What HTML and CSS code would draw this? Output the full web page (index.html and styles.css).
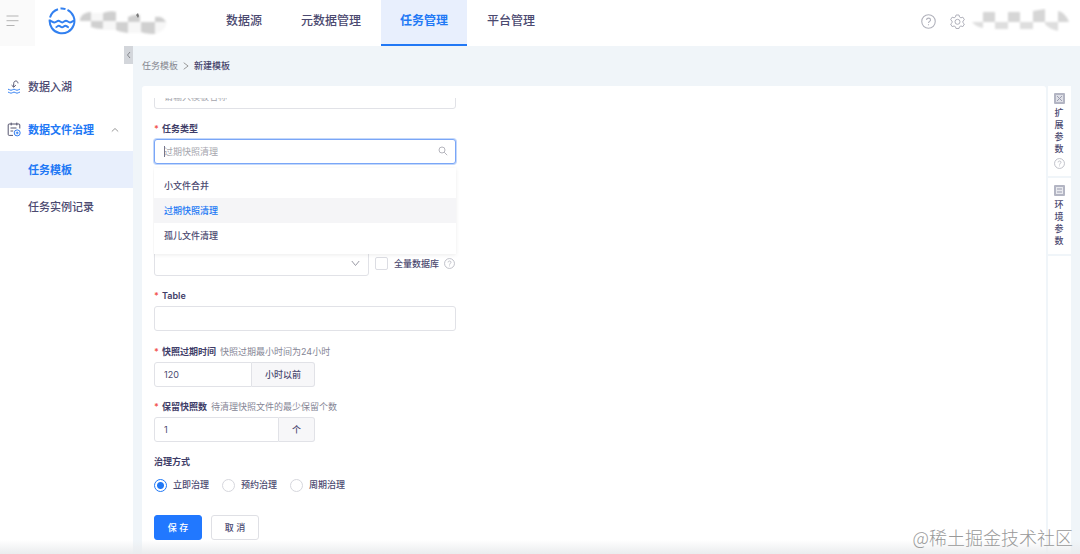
FILE: index.html
```html
<!DOCTYPE html>
<html lang="zh-CN">
<head>
<meta charset="utf-8">
<title>新建模板</title>
<link rel="stylesheet" href="styles.css">
</head>
<body>
<svg class="defs" aria-hidden="true">
  <symbol id="help" viewBox="0 0 14 14"><circle cx="7" cy="7" r="6.3"/><path d="M5.2 5.6c0-2.4 3.7-2.3 3.7-.1 0 1.5-1.9 1.4-1.9 3M7 9.6v1"/></symbol>
  <filter id="soft"><feGaussianBlur stdDeviation="0.9"/></filter>
</svg>
<div class="app">
  <header class="header">
    <button class="menu-btn" aria-label="菜单">
      <svg width="13" height="12" viewBox="0 0 13 12"><path d="M.5 1h12M.5 5.700h12M.5 10.500h8"/></svg>
    </button>
    <div class="brand">
      <svg class="logo" width="28" height="28" viewBox="0 0 28 28">
        <path d="M2 10.500A12.400 12.400 0 0 1 10 2.300M12.500 1.600a12.400 12.400 0 0 1 5 .5M19.500 2.800A12.400 12.400 0 1 1 1.700 12.500"/>
        <path d="M1.800 13.700c2 0 2.600 1.700 4.600 1.700s2.600-1.700 4-1.700 2.300 1.700 3.800 1.700 2.300-1.700 3.800-1.700 2.300 1.700 4 1.700 2.500-1.700 4.300-1.700M7.600 20.200c1.800 0 1.800-1.500 3.200-1.500s1.900 1.600 3.300 1.600 1.900-1.600 3.300-1.600 1.700 1.500 3.400 1.500"/>
      </svg>
      <svg class="mosaic" width="90" height="26" viewBox="0 0 90 26">
        <g filter="url(#soft)">
          <path fill="#cfcfcf" d="M1 9C3 4 7 2 12 2v9H1zM24 3q8-3 13-1v9H24zM49 7q6-3 12-2v7H49zM76 7q8-1 11 5H76z"/>
          <path fill="#d0d0d0" d="M12 11h12v8q-7 0-12-2zM37 12h12v11q-8-1-12-3zM62 12h14v12q-9 0-14-2z"/>
          <path fill="#f7f7f7" d="M12 3h12v8H12zM24 11h13v9H24zM49 12h13v11H49zM76 12h12q-1 9-12 12z"/>
        </g>
        <path fill="#777" d="M57 5l2-2 1 3-1 2z"/>
      </svg>
    </div>
    <nav class="nav">
      <a href="#">数据源</a>
      <a href="#">元数据管理</a>
      <a href="#" class="active" aria-current="page">任务管理</a>
      <a href="#">平台管理</a>
    </nav>
    <div class="tools">
      <button aria-label="帮助"><svg class="line" width="15" height="15"><use href="#help"/></svg></button>
      <button aria-label="设置"><svg class="line" width="15" height="15" viewBox="0 0 15 15"><path d="M6 1h3l.5 2 1.400.8 2-.6 1.500 2.600-1.500 1.300v1.600l1.500 1.300-1.500 2.600-2-.6-1.400.8L9 14.500H6l-.5-1.700-1.400-.8-2 .6L.600 10l1.500-1.300V7.100L.600 5.800l1.500-2.600 2 .6L5.500 3z"/><circle cx="7.500" cy="7.800" r="2.500"/></svg></button>
      <svg class="mosaic" width="100" height="26" viewBox="0 0 100 26">
        <g filter="url(#soft)">
          <path fill="#d6d6d6" d="M12 4h12v10H12zM37 4h12v10H37zM62 3l12-2v13H62zM87 3q7 1 11 11H87z"/>
          <path fill="#dedede" d="M1 14h11v6q-7-1-11-6zM24 14h13v7H24zM49 14h13v7H49zM74 14h13v9q-9-2-13-7z"/>
        </g>
      </svg>
    </div>
  </header>

  <div class="body">
    <aside class="sidebar">
      <a href="#" class="side-item">
        <svg width="14" height="14" viewBox="0 0 14 14"><path class="dark" d="M11 3.300C10.700 0 6.700.4 6.700 3.500V7M4.600 5.200l2.100 2 2.100-2"/><path class="blue" d="M1 9.300c1.500 0 1.500.9 3 .9s1.500-.9 3-.9 1.500.9 3 .9 1.500-.9 3-.9M1 12.200c1.500 0 1.500.9 3 .9s1.500-.9 3-.9 1.500.9 3 .9 1.500-.9 3-.9"/></svg>
        <span>数据入湖</span>
      </a>
      <a href="#" class="side-item parent">
        <svg width="14" height="15" viewBox="0 0 14 15"><path class="dark" d="M6 13.400H2.200a1 1 0 0 1-1-1V3a1 1 0 0 1 1-1h9.600a1 1 0 0 1 1 1v3.500M4.200.6v2.800M9.800.6v2.800M3.500 6h6M3.500 9h2.700"/><circle class="blue" cx="10.200" cy="10.900" r="3"/><path class="blue" d="M10.200 9.500v2.800M8.800 10.900h2.800"/></svg>
        <span>数据文件治理</span>
        <svg class="caret" width="8" height="6" viewBox="0 0 8 6"><path d="m.8 4.500 3.200-3 3.200 3"/></svg>
      </a>
      <a href="#" class="sub-item active" aria-current="page">任务模板</a>
      <a href="#" class="sub-item">任务实例记录</a>
      <button class="collapse" aria-label="收起"><svg width="5" height="8" viewBox="0 0 5 8"><path d="M4 1 1.500 4 4 7"/></svg></button>
    </aside>

    <main class="main">
      <nav class="crumbs" aria-label="路径">
        <a href="#">任务模板</a>
        <svg width="6" height="8" viewBox="0 0 6 8"><path d="m.7.700 4.400 3.300L.7 7.300"/></svg>
        <span>新建模板</span>
      </nav>
      <div class="content">
        <section class="card">
          <form class="form">
            <div class="field first">
              <input class="control" type="text" aria-label="模板名称" placeholder="请输入模板名称">
            </div>
            <div class="field">
              <label class="label required" for="type">任务类型</label>
              <div class="combo">
                <input id="type" class="control focused" type="text" role="combobox" aria-expanded="true" aria-controls="types" placeholder="过期快照清理">
                <span class="text-cursor"></span>
                <svg class="search" width="10" height="10" viewBox="0 0 10 10"><circle cx="4" cy="4" r="3"/><path d="m6.200 6.200 3 3"/></svg>
                <ul id="types" class="options" role="listbox">
                  <li role="option">小文件合并</li>
                  <li role="option" class="selected" aria-selected="true">过期快照清理</li>
                  <li role="option">孤儿文件清理</li>
                </ul>
              </div>
            </div>
            <div class="field tall">
              <div class="label"></div>
              <input class="control" type="text" aria-label="Catalog">
            </div>
            <div class="field tall">
              <div class="label"></div>
              <div class="row">
                <div class="select">
                  <select class="control" aria-label="Database"><option></option></select>
                  <svg width="9" height="7" viewBox="0 0 9 7"><path d="m.8 1 3.700 4.500L8.200 1"/></svg>
                </div>
                <label class="check"><input type="checkbox">全量数据库</label>
                <svg class="line help" width="11" height="11"><use href="#help"/></svg>
              </div>
            </div>
            <div class="field">
              <label class="label required" for="table">Table</label>
              <input id="table" class="control" type="text">
            </div>
            <div class="field tall">
              <label class="label required" for="expire">快照过期时间<small>快照过期最小时间为24小时</small></label>
              <div class="group"><input id="expire" class="control" type="text" value="120"><span class="unit">小时以前</span></div>
            </div>
            <div class="field">
              <label class="label required" for="keep">保留快照数<small>待清理快照文件的最少保留个数</small></label>
              <div class="group"><input id="keep" class="control" type="text" value="1"><span class="unit">个</span></div>
            </div>
            <fieldset class="field">
              <legend class="label">治理方式</legend>
              <div class="radios">
                <label><input type="radio" name="mode" checked>立即治理</label>
                <label><input type="radio" name="mode">预约治理</label>
                <label><input type="radio" name="mode">周期治理</label>
              </div>
            </fieldset>
            <div class="actions">
              <button type="button" class="btn primary">保 存</button>
              <button type="button" class="btn">取 消</button>
            </div>
          </form>
        </section>
        <aside class="tabs">
          <button class="tab">
            <svg width="11" height="11" viewBox="0 0 11 11"><rect width="11" height="11" rx="1" fill="#b3b5c3"/><rect x="2" y="2" width="7" height="7" fill="#dfe0e7"/><path d="m3 3 5 5M8 3 3 8" stroke="#9b9db0"/></svg>
            <span>扩展参数</span>
            <svg class="line" width="11" height="11"><use href="#help"/></svg>
          </button>
          <button class="tab">
            <svg width="11" height="11" viewBox="0 0 11 11"><rect width="11" height="11" rx="1" fill="#b3b5c3"/><path d="M2 2h7v7H2z" fill="#e8e9ee"/><path d="M3 4h5M3 7h5" stroke="#9b9db0"/></svg>
            <span>环境参数</span>
          </button>
          <div class="tab-rest"></div>
        </aside>
      </div>
    </main>
  </div>
  <div class="fade"></div>
  <div class="watermark">@稀土掘金技术社区</div>
</div>
</body>
</html>
```
FILE: styles.css
```css
* { box-sizing: border-box; }
body {
  margin: 0;
  font: 9px/12px Inter, "Noto Sans CJK SC", sans-serif;
  color: #4b4970;
  background: #fff;
}
button, input, select { font: inherit; color: inherit; margin: 0; }
button { border: 0; padding: 0; background: none; cursor: pointer; }
a { color: inherit; text-decoration: none; }
svg { display: block; flex: none; fill: none; stroke-width: 1; }
.defs { position: absolute; width: 0; height: 0; }
.line { stroke: #b0b1bb; }

.app { position: relative; display: flex; flex-direction: column; height: 100vh; overflow: hidden; }

.header { display: flex; align-items: stretch; height: 46px; flex: none; background: #fff; }
.menu-btn { width: 35px; padding: 0 0 4px 6px; background: #fafafa; }
.menu-btn svg { stroke: #b4b4b4; }
.brand { display: flex; align-items: center; gap: 3px; width: 172px; padding: 0 0 5px 13px; }
.logo { stroke: #3280f0; stroke-width: 2; }
.brand .mosaic { align-self: flex-start; margin-top: 10px; }
.nav { display: flex; flex: 1; gap: 1px; font-size: 12px; }
.nav a { display: flex; align-items: center; padding: 0 19px 2px; border-bottom: 2px solid transparent; font-weight: 500; }
.nav .active { color: #2178f5; background: #e8effd; border-color: #2178f5; font-weight: 700; }
.tools { display: flex; align-items: center; gap: 14px; padding: 0 9px 4px 0; }
.tools .mosaic { margin-left: -8px; }

.body { display: flex; flex: 1; min-height: 0; }
.sidebar { position: relative; width: 133px; flex: none; padding-top: 19px; font-size: 11px; background: #fff; }
.side-item { display: flex; align-items: center; gap: 7px; height: 43px; padding-left: 7px; font-weight: 500; }
.side-item .dark { stroke: #55546f; }
.side-item .blue { stroke: #2f7df2; }
.parent { color: #2178f5; font-weight: 700; }
.caret { margin-left: 10px; stroke: #999; }
.sub-item { display: flex; align-items: center; height: 37px; padding-left: 28px; font-weight: 500; }
.sub-item.active { color: #2178f5; background: #e8effc; font-weight: 700; }
.collapse { position: absolute; top: 0; right: 0; display: flex; align-items: center; justify-content: center; width: 9px; height: 18px; background: #d3d6db; }
.collapse svg { stroke: #85878d; }

.main { display: flex; flex-direction: column; flex: 1; min-width: 0; padding: 0 9px; background: #f0f5f9; }
.crumbs { display: flex; align-items: center; gap: 5px; height: 40px; flex: none; color: #85858f; }
.crumbs svg { stroke: #999; }
.crumbs span { color: #45436b; font-weight: 500; }
.content { display: flex; flex: 1; gap: 2px; min-height: 0; }
.card { flex: 1; display: flex; padding: 12px 12px 0; background: #fff; border-radius: 3px 3px 0 0; }
.form { flex: 1; overflow: hidden; padding-left: 1px; margin-left: -1px; }

.field { width: 302px; margin: 0 0 10px; padding: 0; border: 0; }
.first { margin-top: -14px; }
.label { display: flex; align-items: center; height: 20px; padding: 0; color: #3f3d68; font-weight: 600; }
.tall .label { height: 21px; }
.required::before { content: "*"; width: 8px; color: #f2554f; }
.label small { margin-left: 4px; font-size: 9px; font-weight: 400; color: #858595; }
.control { display: block; width: 100%; height: 25px; padding: 0 9px; border: 1px solid #e1e2e7; border-radius: 3px; background: #fff; outline: 0; }
.control::placeholder { color: #a5a5ad; opacity: 1; }
.focused { border-color: #7aa6f7; box-shadow: 0 0 0 1px #c3d8fb; }
.combo { position: relative; }
.text-cursor { position: absolute; top: 7px; left: 10px; width: 1px; height: 11px; background: #77768a; }
.search { position: absolute; top: 7px; right: 8px; stroke: #b5b5bd; }
.options { position: absolute; z-index: 1; top: 29px; left: 0; right: 0; margin: 0; padding: 5px 0 6px; list-style: none; background: #fff; box-shadow: 0 1px 4px #00000014; font-weight: 500; }
.options li { height: 25px; padding: 0 10px; line-height: 25px; }
.options .selected { color: #2178f5; background: #f5f5f7; }
.row { display: flex; align-items: center; }
.select { position: relative; width: 215px; margin-right: 6px; }
.select .control { appearance: none; }
.select svg { position: absolute; top: 9px; right: 9px; stroke: #999aa5; }
.check { display: flex; align-items: center; gap: 6px; font-weight: 500; }
.check input { appearance: none; width: 13px; height: 13px; border: 1px solid #dcdde3; border-radius: 2px; background: #fff; }
.help { margin-left: 5px; }
.group { display: flex; width: 161px; }
.group .control { flex: 1; width: 0; border-radius: 3px 0 0 3px; }
.unit { display: flex; align-items: center; padding: 0 13px; border: 1px solid #e1e2e7; border-left: 0; border-radius: 0 3px 3px 0; background: #f7f7f9; font-weight: 500; }
.radios { display: flex; gap: 13px; padding-top: 6px; }
.radios label { display: flex; align-items: center; gap: 6px; height: 14px; font-weight: 500; }
.radios input { appearance: none; width: 13px; height: 13px; border: 1px solid #d6d7dd; border-radius: 50%; background: #fff; }
.radios input:checked { border-color: #2178f5; background: radial-gradient(circle, #2178f5 3px, #fff 4px); }
.actions { display: flex; gap: 9px; padding-top: 13px; }
.btn { height: 25px; min-width: 48px; padding: 0 12px; border: 1px solid #dfe0e5; border-radius: 3px; background: #fff; font-weight: 500; }
.primary { border-color: #2178ff; background: #2178ff; color: #fff; }

.tabs { display: flex; flex-direction: column; gap: 2px; width: 23px; }
.tab { display: flex; flex-direction: column; align-items: center; gap: 3px; padding: 7px 7px 7px 6px; background: #fff; font-weight: 500; }
.tab span { width: 9px; line-height: 12px; word-break: break-all; }
.tab-rest { flex: 1; background: #fff; }

.fade { position: absolute; left: 0; right: 0; bottom: 0; height: 14px; background: linear-gradient(#f0f0f000, #eaecee); pointer-events: none; }
.watermark { position: absolute; right: 7px; bottom: 6px; font: 300 18px/22px "Noto Sans CJK SC", sans-serif; color: #999; }
```
